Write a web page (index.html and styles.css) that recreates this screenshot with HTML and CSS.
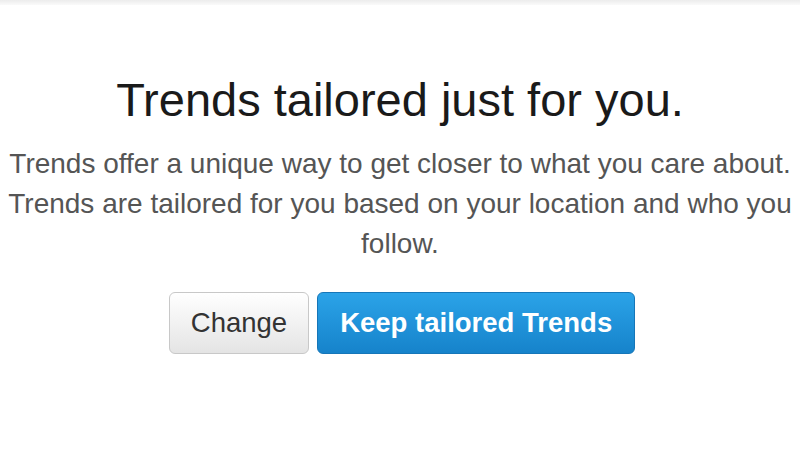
FILE: index.html
```html
<!DOCTYPE html>
<html lang="en">
<head>
<meta charset="utf-8">
<title>Trends tailored just for you</title>
<link rel="stylesheet" href="styles.css">
</head>
<body>
<div class="topbar"></div>
<main class="dialog">
  <h1 class="title">Trends tailored just for you.</h1>
  <p class="desc">Trends offer a unique way to get closer to what you care about. Trends are tailored for you based on your location and who you follow.</p>
  <div class="actions">
    <button class="btn btn-default">Change</button>
    <button class="btn btn-primary">Keep tailored Trends</button>
  </div>
</main>
</body>
</html>
```

FILE: styles.css
```css
html, body {
  margin: 0;
  padding: 0;
  background: #fff;
}

body {
  width: 800px;
  height: 450px;
  overflow: hidden;
  font-family: "Liberation Sans", Arial, Helvetica, sans-serif;
}

.topbar {
  height: 5px;
  background: linear-gradient(#ececec, #fafafa);
}

.dialog {
  display: flex;
  flex-direction: column;
  align-items: center;
  text-align: center;
  padding-top: 68px;
}

.title {
  margin: 0;
  font-size: 47px;
  line-height: 54px;
  font-weight: normal;
  color: #1a1a1a;
}

.desc {
  margin: 17px 0 0;
  width: 800px;
  font-size: 28px;
  line-height: 40px;
  color: #555;
}

.actions {
  display: flex;
  gap: 8px;
  margin-top: 28px;
  margin-left: 4px;
}

.btn {
  height: 62px;
  border-radius: 6px;
  font-family: "Liberation Sans", Arial, Helvetica, sans-serif;
  font-size: 27.5px;
  padding: 0 21px;
  cursor: pointer;
}

.btn-default {
  background: linear-gradient(#ffffff, #e4e4e4);
  border: 1px solid #c8c8c8;
  color: #333;
}

.btn-primary {
  background: linear-gradient(#2ba3e8, #1683cb);
  border: 1px solid #1676b8;
  color: #fff;
  font-weight: bold;
  padding: 0 22px;
}
```
